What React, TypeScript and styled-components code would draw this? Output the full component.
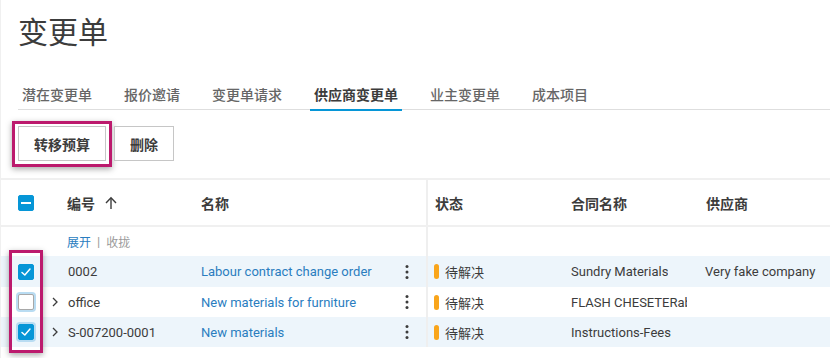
import React from "react";
import styled, { createGlobalStyle } from "styled-components";

const Global = createGlobalStyle`
  html, body { margin: 0; padding: 0; background: #fff; }
  body {
    font-family: Roboto, "Noto Sans CJK SC", sans-serif;
    color: #3c3c3c;
    width: 830px;
    height: 358px;
    overflow: hidden;
  }
  * { box-sizing: border-box; }
`;

const Page = styled.div`
  width: 830px;
  height: 358px;
  overflow: hidden;
  border-left: 1px solid #f0f0f0;
`;

const Title = styled.h1`
  margin: 0;
  padding: 12px 0 0 17px;
  font-size: 30px;
  line-height: 36px;
  font-weight: 400;
  color: #3c3c3c;
  font-family: "Noto Sans CJK SC", sans-serif;
`;

const TabBar = styled.div`
  display: flex;
  gap: 24px;
  margin: 36px 0 0 17px;
  border-bottom: 1px solid #dedede;
  height: 26px;
`;

const Tab = styled.div<{ $active?: boolean }>`
  padding: 0 4px 5px;
  font-size: 14px;
  line-height: 20px;
  font-family: "Noto Sans CJK SC", sans-serif;
  font-weight: ${(p) => (p.$active ? 700 : 500)};
  color: ${(p) => (p.$active ? "#3c3c3c" : "#666")};
  border-bottom: 2px solid ${(p) => (p.$active ? "#0696d7" : "transparent")};
  height: 27px;
`;

const Toolbar = styled.div`
  display: flex;
  gap: 8px;
  padding: 16px 0 17px 17px;
  border-bottom: 2px solid #f0f0f0;
`;

const ButtonWrap = styled.div`
  position: relative;
`;

const Button = styled.button`
  height: 35px;
  padding: 0 15px;
  border: 1px solid #c6c6c6;
  background: #fff;
  font-family: "Noto Sans CJK SC", sans-serif;
  font-size: 14px;
  font-weight: 700;
  color: #3c3c3c;
`;

const Highlight = styled.div`
  position: absolute;
  border: 3px solid #bc1a6d;
  box-shadow: 0 2px 6px rgba(0, 0, 0, 0.35);
  pointer-events: none;
`;

const Table = styled.div`
  position: relative;
`;

const COLS = "50px 16px 134px 200px 27px 136px 135px 1fr";

const Row = styled.div<{ $h: number; $alt?: boolean; $line?: boolean }>`
  display: grid;
  grid-template-columns: ${COLS};
  height: ${(p) => p.$h}px;
  align-items: center;
  background: ${(p) => (p.$alt ? "#edf5fb" : "#fff")};
  border-bottom: ${(p) => (p.$line ? "2px solid #f0f0f0" : "none")};
  font-size: 13px;
`;

const Cell = styled.div<{ $pl?: number; $pr?: number; $sep?: boolean; $head?: boolean }>`
  display: flex;
  align-items: center;
  height: 100%;
  padding-left: ${(p) => p.$pl ?? 0}px;
  padding-right: ${(p) => p.$pr ?? 12}px;
  overflow: hidden;
  white-space: nowrap;
  border-right: ${(p) => (p.$sep ? "2px solid #efefef" : "none")};
  font-weight: ${(p) => (p.$head ? 700 : 400)};
  font-size: ${(p) => (p.$head ? 14 : 13)}px;
  font-family: ${(p) =>
    p.$head ? '"Noto Sans CJK SC", sans-serif' : 'Roboto, "Noto Sans CJK SC", sans-serif'};
  color: #3c3c3c;
`;

const Clip = styled.span`
  display: block;
  overflow: hidden;
  white-space: nowrap;
  min-width: 0;
`;

const Check = styled.div<{ $checked?: boolean; $ring?: boolean }>`
  width: 16px;
  height: 16px;
  border-radius: 2px;
  background: ${(p) => (p.$checked ? "#0696d7" : "#fff")};
  border: 1px solid ${(p) => (p.$checked ? "#0696d7" : "#a8a8a8")};
  box-shadow: ${(p) => (p.$ring ? "0 0 0 2px #b9dcf2" : "none")};
  display: flex;
  align-items: center;
  justify-content: center;
`;

const Link = styled.span`
  color: #2a7dbf;
`;

const ExpandLink = styled.span<{ $on?: boolean }>`
  color: ${(p) => (p.$on ? "#2a7dbf" : "#9a9a9a")};
  font-family: "Noto Sans CJK SC", sans-serif;
  font-size: 12px;
`;

const Pipe = styled.span`
  color: #9a9a9a;
  margin: 0 6px;
  font-size: 13px;
`;

const StatusBar = styled.span`
  width: 5px;
  height: 15px;
  border-radius: 3px;
  background: #f9a51b;
  margin-right: 6px;
  flex: none;
`;

const StatusText = styled.span`
  font-family: "Noto Sans CJK SC", sans-serif;
`;

const CheckIcon = () => (
  <svg width="12" height="12" viewBox="0 0 12 12">
    <polyline points="2,6.5 4.8,9 10,3" fill="none" stroke="#fff" strokeWidth="1.5" strokeLinecap="round" strokeLinejoin="round" />
  </svg>
);

const Minus = () => (
  <svg width="10" height="4" viewBox="0 0 10 4">
    <rect x="0" y="1" width="10" height="2" fill="#fff" />
  </svg>
);

const Chevron = () => (
  <svg width="9" height="12" viewBox="0 0 9 12">
    <polyline points="2,2 6,6 2,10" fill="none" stroke="#3c3c3c" strokeWidth="1.3" />
  </svg>
);

const Kebab = () => (
  <svg width="4" height="16" viewBox="0 0 4 16">
    <circle cx="2" cy="2.5" r="1.5" fill="#3c3c3c" />
    <circle cx="2" cy="8" r="1.5" fill="#3c3c3c" />
    <circle cx="2" cy="13.5" r="1.5" fill="#3c3c3c" />
  </svg>
);

const SortUp = () => (
  <svg width="12" height="14" viewBox="0 0 12 14" style={{ marginLeft: 10 }}>
    <line x1="6" y1="2" x2="6" y2="13" stroke="#3c3c3c" strokeWidth="1.4" />
    <polyline points="1,7 6,1.8 11,7" fill="none" stroke="#3c3c3c" strokeWidth="1.4" />
  </svg>
);

const tabs = ["潜在变更单", "报价邀请", "变更单请求", "供应商变更单", "业主变更单", "成本项目"];

const rows = [
  { checked: true, ring: false, chevron: false, num: "0002", name: "Labour contract change order", contract: "Sundry Materials", supplier: "Very fake company" },
  { checked: false, ring: true, chevron: true, num: "office", name: "New materials for furniture", contract: "FLASH CHESETERabc", supplier: "" },
  { checked: true, ring: true, chevron: true, num: "S-007200-0001", name: "New materials", contract: "Instructions-Fees", supplier: "" },
];

export default function App() {
  return (
    <Page>
      <Global />
      <Title>变更单</Title>
      <TabBar>
        {tabs.map((t) => (
          <Tab key={t} $active={t === "供应商变更单"}>
            {t}
          </Tab>
        ))}
      </TabBar>
      <Toolbar>
        <ButtonWrap>
          <Button>转移预算</Button>
          <Highlight style={{ left: -6, top: -5, right: -6, bottom: -6 }} />
        </ButtonWrap>
        <ButtonWrap>
          <Button>删除</Button>
        </ButtonWrap>
      </Toolbar>
      <Table>
        <Row $h={47} $line>
          <Cell $pl={17}>
            <Check $checked>
              <Minus />
            </Check>
          </Cell>
          <Cell $pr={0} />
          <Cell $head>
            编号
            <SortUp />
          </Cell>
          <Cell $head>名称</Cell>
          <Cell $sep />
          <Cell $head $pl={7}>状态</Cell>
          <Cell $head $pl={7}>合同名称</Cell>
          <Cell $head $pl={7}>供应商</Cell>
        </Row>
        <Row $h={29}>
          <Cell />
          <Cell $pr={0} />
          <Cell>
            <ExpandLink $on>展开</ExpandLink>
            <Pipe>|</Pipe>
            <ExpandLink>收拢</ExpandLink>
          </Cell>
          <Cell />
          <Cell $sep />
          <Cell />
          <Cell />
          <Cell />
        </Row>
        {rows.map((r, i) => (
          <Row key={r.num} $h={i === 0 ? 31 : 30} $alt={i !== 1}>
            <Cell $pl={17}>
              <Check $checked={r.checked} $ring={r.ring}>
                {r.checked && <CheckIcon />}
              </Check>
            </Cell>
            <Cell $pl={0} $pr={0}>{r.chevron && <Chevron />}</Cell>
            <Cell $pl={1}>{r.num}</Cell>
            <Cell>
              <Link>{r.name}</Link>
            </Cell>
            <Cell $sep $pl={4} $pr={0}>
              <Kebab />
            </Cell>
            <Cell $pl={6}>
              <StatusBar />
              <StatusText>待解决</StatusText>
            </Cell>
            <Cell $pl={7}>
              <Clip>{r.contract}</Clip>
            </Cell>
            <Cell $pl={6}>{r.supplier}</Cell>
          </Row>
        ))}
        <Highlight style={{ left: 8, top: 70, width: 34, height: 103 }} />
      </Table>
    </Page>
  );
}
